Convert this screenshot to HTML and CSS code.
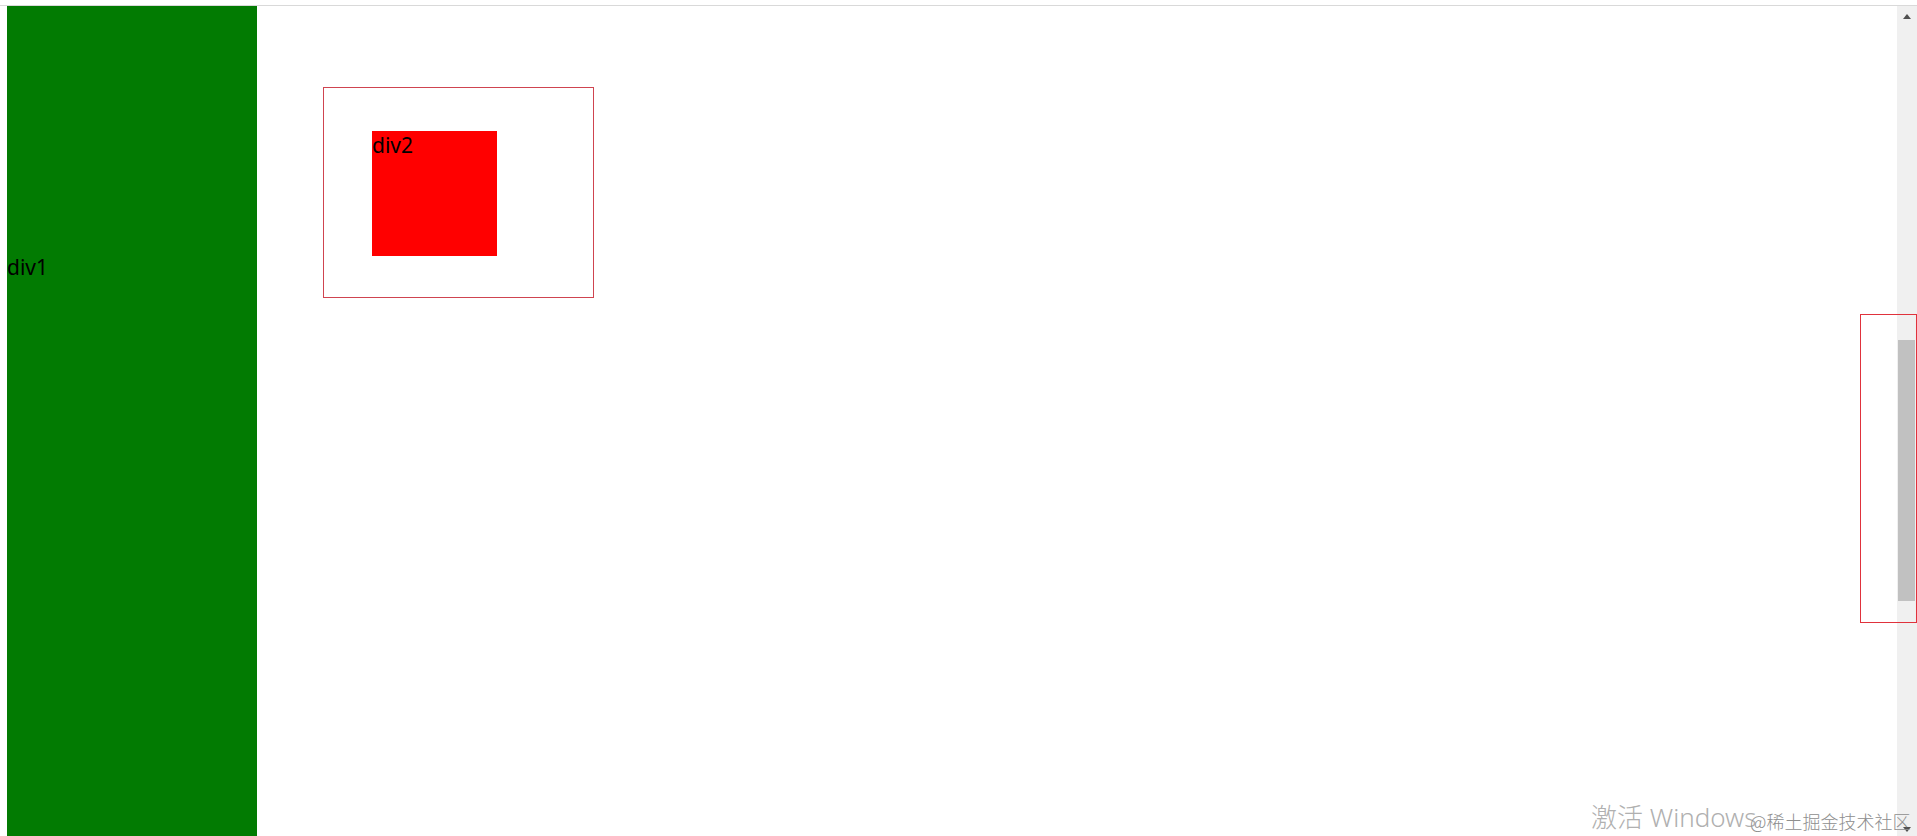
FILE: index.html
```html
<!DOCTYPE html>
<html lang="zh">
<head>
<meta charset="utf-8">
<title>div1 div2</title>
<link rel="stylesheet" href="styles.css">
</head>
<body>
<div class="page">
  <div class="topbar"></div>
  <div class="viewport">
    <div class="gutter"></div>
    <div class="div1">div1</div>
    <div class="main">
      <div class="outer">
        <div class="div2">div2</div>
      </div>
    </div>
    <div class="scrollbar">
      <div class="sb-btn sb-up"><span class="tri-up"></span></div>
      <div class="sb-track"><div class="sb-thumb"></div></div>
      <div class="sb-btn sb-down"><span class="tri-down"></span></div>
    </div>
  </div>
  <div class="mark-box"></div>
  <div class="watermark">
    <span class="win">激活 Windows</span>
  </div>
  <div class="juejin">@稀土掘金技术社区</div>
</div>
</body>
</html>
```

FILE: styles.css
```css
html, body {
  margin: 0;
  padding: 0;
  background: #ffffff;
  overflow: hidden;
}

.page {
  position: relative;
  width: 1917px;
  height: 836px;
  display: flex;
  flex-direction: column;
  font-family: "Noto Sans", "Noto Sans CJK SC", sans-serif;
  color: #000;
}

.topbar {
  height: 5px;
  flex: none;
  border-bottom: 1px solid #d9d9d9;
  background: #fff;
}

.viewport {
  flex: 1;
  display: flex;
  min-height: 0;
}

.gutter {
  width: 7px;
  flex: none;
}

.div1 {
  width: 250px;
  flex: none;
  background: #027b02;
  font-size: 21px;
  line-height: 25px;
  padding-top: 249px;
  box-sizing: border-box;
}

.main {
  flex: 1;
  padding-left: 66px;
  padding-top: 81px;
}

.outer {
  border: 1px solid #cf4450;
  padding: 43px 0 0 48px;
  width: 221px;
  height: 166px;
}

.div2 {
  width: 125px;
  height: 125px;
  box-sizing: border-box;
  padding-top: 2px;
  background: #ff0000;
  font-size: 21px;
  line-height: 25px;
}

.scrollbar {
  width: 20px;
  flex: none;
  background: #f0f0f0;
  display: flex;
  flex-direction: column;
}

.sb-btn {
  height: 21px;
  flex: none;
  display: flex;
  justify-content: center;
  box-sizing: border-box;
}

.sb-up {
  align-items: flex-start;
  padding-top: 8px;
}

.sb-down {
  align-items: flex-end;
  padding-bottom: 4px;
}

.tri-up {
  width: 0;
  height: 0;
  border-left: 4.5px solid transparent;
  border-right: 4.5px solid transparent;
  border-bottom: 5px solid #505050;
}

.tri-down {
  width: 0;
  height: 0;
  border-left: 4.5px solid transparent;
  border-right: 4.5px solid transparent;
  border-top: 5px solid #505050;
}

.sb-track {
  flex: 1;
  padding-top: 313px;
}

.sb-thumb {
  margin-left: 1px;
  width: 17px;
  height: 261px;
  background: #c1c1c1;
}

.mark-box {
  position: absolute;
  left: 1860px;
  top: 314px;
  width: 55px;
  height: 307px;
  border: 1px solid #e0323c;
}

.watermark {
  position: absolute;
  left: 1591px;
  top: 804px;
  font-family: "Noto Sans", "Noto Sans CJK SC", sans-serif;
  font-size: 26px;
  line-height: 26px;
  font-weight: 300;
  color: #b0b0b0;
  white-space: nowrap;
}

.juejin {
  position: absolute;
  left: 1750px;
  top: 812px;
  font-family: "Noto Sans CJK SC", sans-serif;
  font-size: 18px;
  line-height: 18px;
  font-weight: 300;
  color: #8e8e8e;
  white-space: nowrap;
}
```
